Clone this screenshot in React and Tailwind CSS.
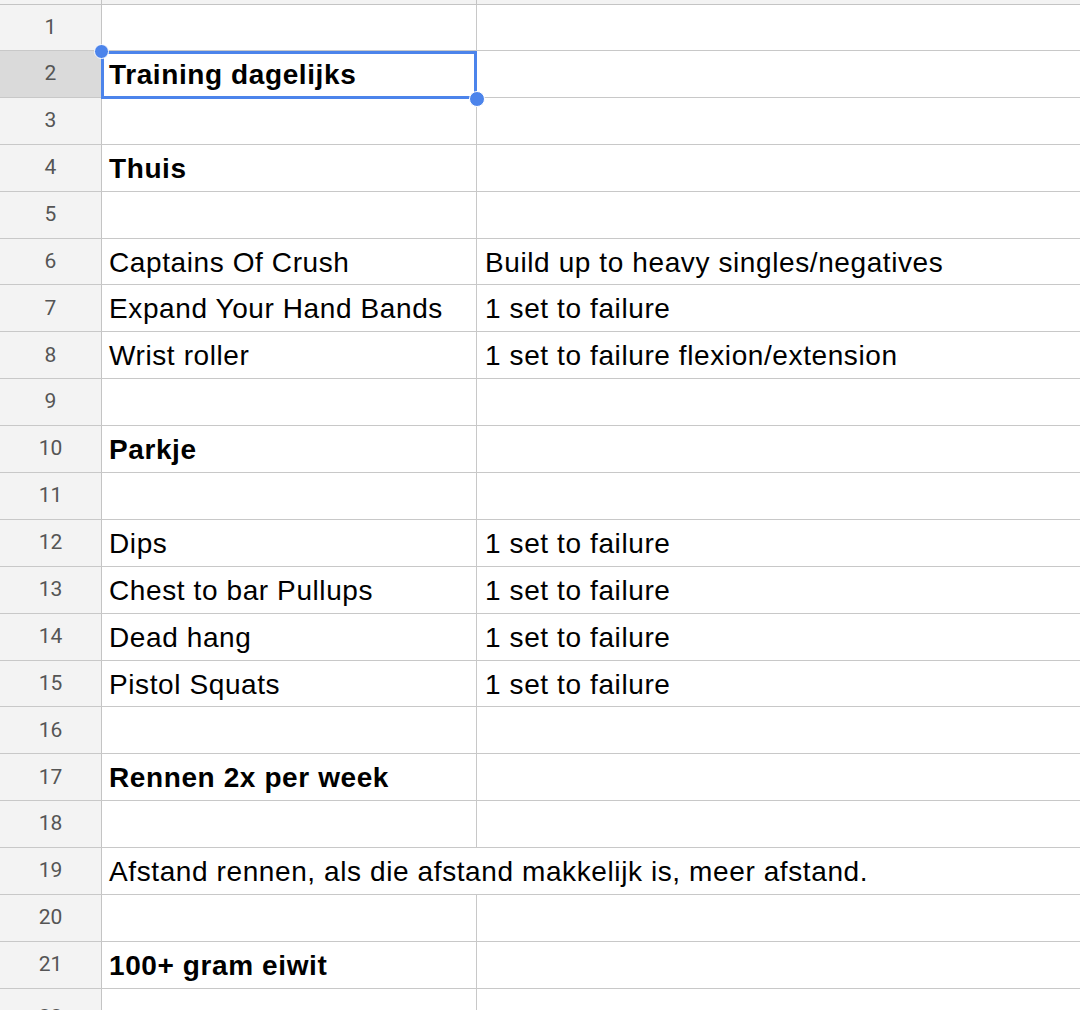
import React from "react";

const rows = [
  { n: 1 },
  { n: 2, a: "Training dagelijks", bold: true, sel: true },
  { n: 3 },
  { n: 4, a: "Thuis", bold: true },
  { n: 5 },
  { n: 6, a: "Captains Of Crush", b: "Build up to heavy singles/negatives" },
  { n: 7, a: "Expand Your Hand Bands", b: "1 set to failure" },
  { n: 8, a: "Wrist roller", b: "1 set to failure flexion/extension" },
  { n: 9 },
  { n: 10, a: "Parkje", bold: true },
  { n: 11 },
  { n: 12, a: "Dips", b: "1 set to failure" },
  { n: 13, a: "Chest to bar Pullups", b: "1 set to failure" },
  { n: 14, a: "Dead hang", b: "1 set to failure" },
  { n: 15, a: "Pistol Squats", b: "1 set to failure" },
  { n: 16 },
  { n: 17, a: "Rennen 2x per week", bold: true },
  { n: 18 },
  { n: 19, span: "Afstand rennen, als die afstand makkelijk is, meer afstand." },
  { n: 20 },
  { n: 21, a: "100+ gram eiwit", bold: true },
  { n: 22 },
];

const cellText = "text-[28px] tracking-[0.6px] text-black whitespace-nowrap leading-none";

export default function App() {
  return (
    <div
      className="w-[1080px] h-[1010px] overflow-hidden bg-white relative"
      style={{ fontFamily: '"Liberation Sans", Arial, sans-serif' }}
    >
      {/* top header strip */}
      <div className="flex h-[5px] border-b border-[#c4c4c4] bg-[#f3f3f3]">
        <div className="w-[102px] border-r border-[#c4c4c4]" />
        <div className="w-[375px] border-r border-[#c4c4c4]" />
        <div className="flex-1" />
      </div>
      {rows.map((r, i) => (
        <div
          key={r.n}
          className={`flex border-b border-[#c8c8c8] ${i === 0 ? "h-[46px]" : "h-[46.9px]"}`}
        >
          <div
            className={`w-[102px] shrink-0 border-r border-[#c4c4c4] flex items-center justify-center text-[21px] text-[#555555] ${
              r.sel ? "bg-[#dadada]" : "bg-[#f3f3f3]"
            }`}
            style={{ fontFamily: 'Roboto, "Liberation Sans", sans-serif' }}
          >
            <span className={r.n === 22 ? "translate-y-[6px]" : ""}>{r.n}</span>
          </div>
          {r.span ? (
            <div className="flex-1 flex items-center pl-[7px] pt-[2px]">
              <span className={cellText}>{r.span}</span>
            </div>
          ) : (
            <>
              <div className="relative w-[375px] shrink-0 border-r border-[#c8c8c8] flex items-center pl-[7px] pt-[2px]">
                {r.a && (
                  <span className={`${cellText} ${r.bold ? "font-bold" : ""}`}>{r.a}</span>
                )}
                {r.sel && (
                  <>
                    <div className="absolute left-[-1px] top-[0px] right-[-1px] bottom-[-2px] border-[3px] border-[#4c84eb] pointer-events-none" />
                    <div className="absolute left-[-8px] top-[-7px] w-[15px] h-[15px] rounded-full bg-[#4c84eb] border-[1.5px] border-white" />
                    <div className="absolute right-[-9px] bottom-[-10px] w-[16px] h-[16px] rounded-full bg-[#4c84eb] border-[1.5px] border-white z-10" />
                  </>
                )}
              </div>
              <div className="flex-1 flex items-center pl-[8px] pt-[2px]">
                {r.b && <span className={cellText}>{r.b}</span>}
              </div>
            </>
          )}
        </div>
      ))}
    </div>
  );
}
